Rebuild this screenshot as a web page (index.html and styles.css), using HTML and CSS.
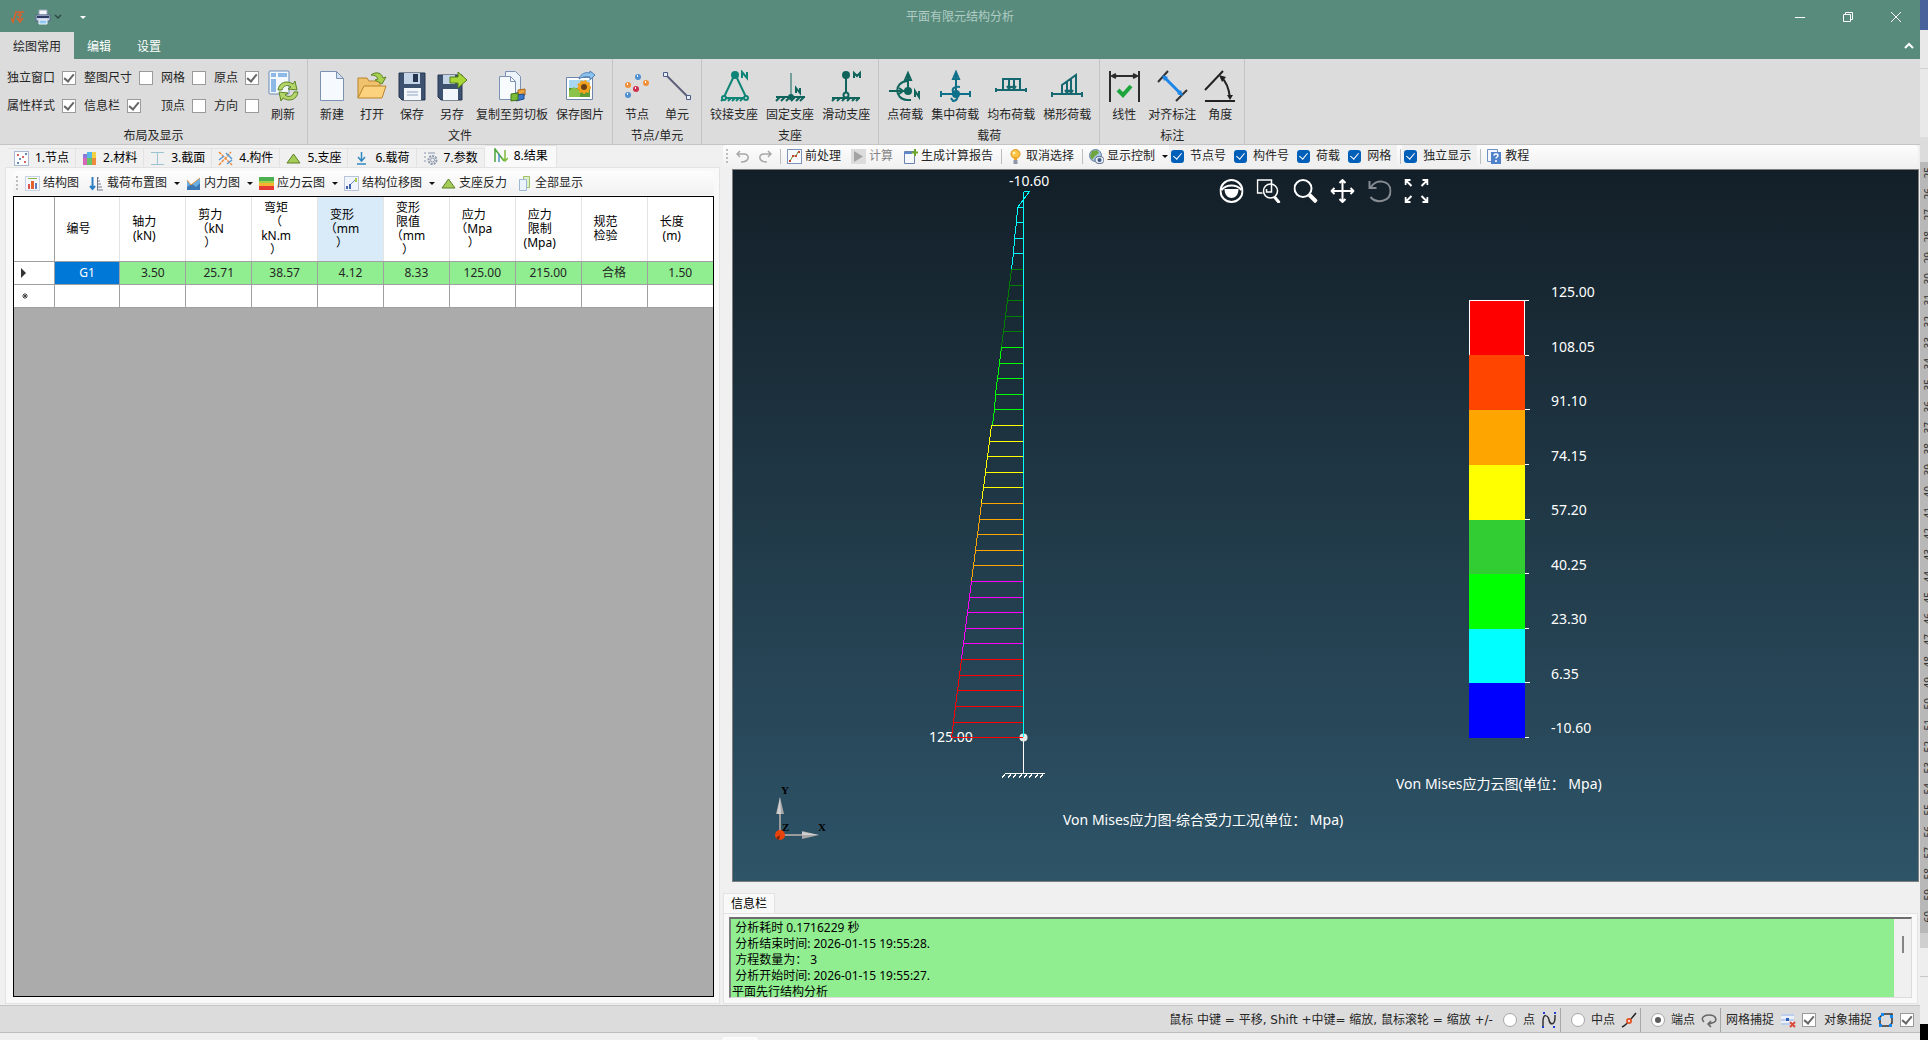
FILE: index.html
```html
<!DOCTYPE html>
<html lang="zh-CN">
<head>
<meta charset="utf-8">
<title>平面有限元结构分析</title>
<link rel="stylesheet" href="styles.css">
</head>
<body>
<div class="desktop">
<div class="app">
  <header class="titlebar">
    <div class="quick">
      <svg class="i14" viewBox="0 0 14 14" fill="none" stroke="#d9622b" stroke-width="1.500"><path d="M0 8l2 4L5 2h8M6 5h5M9 2v8M6 8l3 4 3-4"/></svg>
      <button class="plain" aria-label="打印"><svg class="i16" viewBox="0 0 16 16"><path d="M4 1h8v5H4z" fill="#f4f6fa" stroke="#9aa6bd"/><path d="M1 6h14v6H1z" fill="#c9d2e2" stroke="#55658a"/><path d="M2 8h12" stroke="#2c3c63" stroke-width="2"/><path d="M4 11h8v4H4z" fill="#8fc7f5" stroke="#f4f6fa"/></svg><svg class="i8" viewBox="0 0 8 8" fill="none" stroke="#2c4a41" stroke-width="1.500"><path d="M1 2l3 3 3-3"/></svg></button>
      <button class="plain more" aria-label="自定义"><svg class="i8" viewBox="0 0 8 8"><path d="M1 3h6L4 6z" fill="#fff"/></svg></button>
    </div>
    <h1 class="title">平面有限元结构分析</h1>
    <div class="winbtns">
      <button class="plain" aria-label="最小化"><svg class="i12" viewBox="0 0 12 12" stroke="#fff"><path d="M1 6.500h10"/></svg></button>
      <button class="plain" aria-label="还原"><svg class="i12" viewBox="0 0 12 12" stroke="#fff" fill="none"><path d="M1.500 3.500h7v7h-7zM3.500 3V1.500h7v7H9"/></svg></button>
      <button class="plain" aria-label="关闭"><svg class="i12" viewBox="0 0 12 12" stroke="#fff" fill="none"><path d="M1 1l10 10M11 1L1 11"/></svg></button>
    </div>
  </header>
  <nav class="menu">
    <button class="menutab on">绘图常用</button><button class="menutab">编辑</button><button class="menutab">设置</button>
    <button class="plain fold" aria-label="折叠"><svg class="i12" viewBox="0 0 12 12" stroke="#fff" stroke-width="2" fill="none"><path d="M2 8l4-4 4 4"/></svg></button>
  </nav>

  <section class="ribbon">
    <div class="group">
      <div class="tools">
        <div class="checks">
          <label>独立窗口<input type="checkbox" class="box" checked></label>
          <label>整图尺寸<input type="checkbox" class="box"></label>
          <label>网格<input type="checkbox" class="box"></label>
          <label>原点<input type="checkbox" class="box" checked></label>
          <label>属性样式<input type="checkbox" class="box" checked></label>
          <label>信息栏<input type="checkbox" class="box" checked></label>
          <label>顶点<input type="checkbox" class="box"></label>
          <label>方向<input type="checkbox" class="box"></label>
        </div>
        <button class="big"><svg viewBox="0 0 32 32"><rect x="2" y="1" width="20" height="23" rx="1" fill="#f3f8fd" stroke="#6a8bb5"/><path d="M4 3h5v4H4zM11 3h9v4h-9zM4 9h5v13H4z" fill="#8db9e6"/><path d="M11 20c1-8 9-10 15-6l2-3 2 9-9-1 3-2c-4-3-8-1-9 3z" fill="#b5d56a" stroke="#5d8526"/><path d="M31 22c-1 8-9 10-15 6l-2 3-2-9 9 1-3 2c4 3 8 1 9-3z" fill="#b5d56a" stroke="#5d8526"/></svg>刷新</button>
      </div>
      <div class="caption">布局及显示</div>
    </div>
    <div class="group">
      <div class="tools">
        <button class="big"><svg viewBox="0 0 32 32"><path d="M4.500 1.500h16l7 7v22h-23z" fill="#f6f9fd" stroke="#7c92b5"/><path d="M20.500 1.500v7h7z" fill="#d5e0ef" stroke="#7c92b5"/></svg>新建</button>
        <button class="big"><svg viewBox="0 0 32 32"><path d="M2 28V8h9l2 3h11v5" fill="#f0c26e" stroke="#b9822c"/><path d="M2 28l6-12h22l-4 12z" fill="#fcd27e" stroke="#b9822c"/><path d="M15 5c5-4 11-2 12 3l3-1-4 7-7-4 3-1c-1-3-4-4-7-4z" fill="#a9cf4e" stroke="#5d8526"/></svg>打开</button>
        <button class="big"><svg viewBox="0 0 32 32"><path d="M3 3h26v27H6l-3-3z" fill="#3d5170" stroke="#25344e"/><path d="M8 3h16v11H8z" fill="#c6d4e8"/><path d="M17 4h5v8h-5z" fill="#25344e"/><path d="M8 18h17v12H8z" fill="#f3f6fa"/><path d="M11 22h11M11 25h11" stroke="#8fa2c0"/></svg>保存</button>
        <button class="big"><svg viewBox="0 0 32 32"><path d="M2 5h24v25H5l-3-3z" fill="#3d5170" stroke="#25344e"/><path d="M7 5h12v9H7z" fill="#c6d4e8"/><path d="M7 19h15v11H7z" fill="#f3f6fa"/><path d="M14 7h8V2l9 8-9 8v-5h-8z" fill="#a9d73a" stroke="#557f18"/></svg>另存</button>
        <button class="big"><svg viewBox="0 0 32 32"><path d="M9.500 1.500h10l5 5v16h-15z" fill="#edf3fa" stroke="#7c92b5"/><path d="M3.500 6.500h11l5 5v18h-16z" fill="#f8fbfe" stroke="#7c92b5"/><path d="M14.500 6.500v5h5" fill="none" stroke="#7c92b5"/><path d="M22 20l7-1v6l-7 2z" fill="#efa53a" stroke="#a8641c"/><path d="M20 25l8-1v5l-8 2z" fill="#3a78cf" stroke="#1c4a8f"/><path d="M15 24l7-1v7l-7 1z" fill="#7cba3a" stroke="#41741c"/></svg>复制至剪切板</button>
        <button class="big"><svg viewBox="0 0 32 32"><path d="M2.500 7.500h26v22h-26z" fill="#fff" stroke="#6e86ac"/><path d="M5 10h21v8H5z" fill="#a8d7f4"/><path d="M5 18h21v9H5z" fill="#5d9b35"/><path d="M5 21l5-4 6 4v6H5z" fill="#8bc34a"/><circle cx="20" cy="17" r="6" fill="#f2a11f" stroke="#f2a11f" stroke-width="2" stroke-dasharray="2 2"/><circle cx="20" cy="17" r="3" fill="#67401a"/><path d="M15 9c2-6 7-7 11-6V1l5 4-5 5V7c-5-1-8 0-11 2z" fill="#8ec2ee" stroke="#4b80b5"/></svg>保存图片</button>
      </div>
      <div class="caption">文件</div>
    </div>
    <div class="group">
      <div class="tools">
        <button class="big"><svg viewBox="0 0 32 32"><circle cx="17" cy="7" r="3" fill="#4f8fd3"/><circle cx="7" cy="15" r="3" fill="#f0903a"/><circle cx="25" cy="13" r="3" fill="#f0903a"/><circle cx="15" cy="19" r="3" fill="#d22f4d"/><circle cx="7" cy="25" r="3" fill="#4f8fd3"/><path d="M16 6h1M6 14h1M24 12h1M14 18h1M6 24h1" stroke="#fff" stroke-width="2"/></svg>节点</button>
        <button class="big"><svg viewBox="0 0 32 32"><path d="M5 5l22 22" stroke="#5d5f78" stroke-width="2"/><path d="M2.500 2.500h4v4h-4zM25.500 25.500h4v4h-4z" fill="#e8eef8" stroke="#4b5b85"/></svg>单元</button>
      </div>
      <div class="caption">节点/单元</div>
    </div>
    <div class="group">
      <div class="tools">
        <button class="big"><svg viewBox="0 0 32 32" fill="none" stroke="#0f8577" stroke-width="2"><path d="M16 6L6 27M18 6l10 21M5 28h23M3 31l3-3M10 31l3-3M14 31l3-3M18 31l3-3M22 31l3-3"/><circle cx="17" cy="5" r="3" fill="#0f8577"/><circle cx="6" cy="28" r="2" fill="#dcdcdc"/><circle cx="28" cy="28" r="2" fill="#dcdcdc"/><path d="M24 8V2l5 6V2"/></svg>铰接支座</button>
        <button class="big"><svg viewBox="0 0 32 32" fill="none" stroke="#0f645c" stroke-width="2"><path d="M17 3v24" stroke-width="1"/><path d="M2 27h29M2 31l4-4M7 31l4-4M12 31l4-4M17 31l4-4M22 31l4-4M26 31l4-4"/><circle cx="17" cy="27" r="2" fill="#0f645c"/><path d="M22 23v-5l4 5v-5"/></svg>固定支座</button>
        <button class="big"><svg viewBox="0 0 32 32" fill="none" stroke="#0f645c" stroke-width="2"><path d="M16 5v20M2 28h28M2 31l3-3M7 31l3-3M12 31l3-3M17 31l3-3M22 31l3-3M26 31l3-3"/><circle cx="16" cy="5" r="3" fill="#0f645c"/><circle cx="16" cy="25" r="2.500" fill="#dcdcdc"/><path d="M24 8V3l3 3 3-3v5"/></svg>滑动支座</button>
      </div>
      <div class="caption">支座</div>
    </div>
    <div class="group">
      <div class="tools">
        <button class="big"><svg viewBox="0 0 32 32" fill="none" stroke="#0f645c" stroke-width="2"><path d="M19 21V4M16 10l3-7 3 7zM0 21h18M18 11C5 12 5 29 18 30h4M10 18l4 3-4 3"/><circle cx="19" cy="21" r="3" fill="#0f645c"/><path d="M26 27v-6l4 6v-6"/></svg>点荷载</button>
        <button class="big"><svg viewBox="0 0 32 32" fill="none" stroke="#0f7089" stroke-width="2"><path d="M17 24V4M14 9l3-7 3 7zM2 24h29M2 21v6M31 21v6M21 17c-8-1-9 4-5 7s2 7-2 7l-2-3"/><circle cx="17" cy="24" r="3" fill="#0f7089"/></svg>集中荷载</button>
        <button class="big"><svg viewBox="0 0 32 32" fill="none" stroke="#15686f" stroke-width="2"><path d="M1 20h31M8 20V9h17v11M14 9v9M19 9v9M12 16l2 3 2-3M17 16l2 3 2-3M1 18v4M31 18v4"/></svg>均布荷载</button>
        <button class="big"><svg viewBox="0 0 32 32" fill="none" stroke="#15686f" stroke-width="2"><path d="M1 24h31M11 24v-9L25 5v19M16 12v10M20 9v13M14 20l2 3 2-3M18 20l2 3 2-3M1 22v5M31 22v5M11 15v9"/></svg>梯形荷载</button>
      </div>
      <div class="caption">载荷</div>
    </div>
    <div class="group">
      <div class="tools">
        <button class="big"><svg viewBox="0 0 32 32" fill="none" stroke="#2c2c2c" stroke-width="2"><path d="M2 1v31M31 1v31M4 6h25M8 4L4 6l4 2M25 4l4 2-4 2"/><path d="M10 20l5 5 8-9" stroke="#1ca53d" stroke-width="4"/></svg>线性</button>
        <button class="big"><svg viewBox="0 0 32 32" fill="none" stroke="#333" stroke-width="2"><path d="M2 12L12 1M20 31L31 20"/><path d="M8 7l17 17" stroke="#1b86e8" stroke-width="3"/><path d="M6 5l6 2-4 4zM27 26l-6-2 4-4z" fill="#1b86e8" stroke="none"/></svg>对齐标注</button>
        <button class="big"><svg viewBox="0 0 32 32" fill="none" stroke="#222" stroke-width="2"><path d="M1 31h30M1 20L19 1M17 7c6 5 8 12 9 21"/><path d="M15 5l7 2-4 5zM23 25h6l-3 5z" fill="#222" stroke="none"/></svg>角度</button>
      </div>
      <div class="caption">标注</div>
    </div>
  </section>

  <main class="work">
    <section class="left">
      <div class="steps" role="tablist">
        <button class="step" role="tab"><svg class="i15" viewBox="0 0 15 15"><rect x=".5" y=".5" width="14" height="14" fill="#fbfcfe" stroke="#a9b9d2"/><path d="M3 4h2M8 6h2M10 11h2" stroke="#c33" stroke-width="1.500"/><path d="M5 8h2M11 3h2M3 12h2" stroke="#369" stroke-width="1.500"/></svg>1.节点</button>
        <button class="step" role="tab"><svg class="i15" viewBox="0 0 15 15"><path d="M1 3h4v11H1z" fill="#d667b8"/><path d="M1 3h4v4H1z" fill="#8d7ad9"/><path d="M5 1h5v6H5z" fill="#55b6e8"/><path d="M10 1h4v6h-4z" fill="#f3d145"/><path d="M5 7h5v7H5z" fill="#65c466"/><path d="M10 7h4v7h-4z" fill="#ef8a3c"/></svg>2.材料</button>
        <button class="step" role="tab"><svg class="i15" viewBox="0 0 15 15" fill="none" stroke="#9cc3d2"><path d="M1 1.500h13M1 13.500h13M7.500 2v11"/></svg>3.截面</button>
        <button class="step" role="tab"><svg class="i15" viewBox="0 0 15 15" fill="none" stroke-width="1.500"><path d="M1 1l13 13M1 14L13 1" stroke="#f08a3c" stroke-dasharray="3 1"/><path d="M8 2l6 6M1 9l5-4M9 13l5-4" stroke="#5b9bd5"/></svg>4.构件</button>
        <button class="step" role="tab"><svg class="i15" viewBox="0 0 15 15"><path d="M7.500 3L14 12H1z" fill="#a5cc57" stroke="#5e7f2a"/></svg>5.支座</button>
        <button class="step" role="tab"><svg class="i15" viewBox="0 0 15 15" fill="none" stroke="#3087c2" stroke-width="1.500"><path d="M7.500 1v9M4 6l3.500 4L11 6M3 13h9"/></svg>6.载荷</button>
        <button class="step" role="tab"><svg class="i15" viewBox="0 0 15 15" fill="none" stroke="#8b98ad"><path d="M1 2h2M5 2h7M1 6h2M1 10h2"/><circle cx="9.500" cy="9" r="4" stroke-width="2" stroke-dasharray="2 1"/><circle cx="9.500" cy="9" r="2"/></svg>7.参数</button>
        <button class="step on" role="tab" aria-selected="true"><svg class="i15" viewBox="0 0 15 15" fill="none" stroke-width="1.500"><path d="M2 14V1l9 12" stroke="#4aa33a"/><path d="M6 14V6" stroke="#4a90c8"/><path d="M12 2v11M9 10l3 3 3-3" stroke="#7db93a"/></svg>8.结果</button>
      </div>
      <div class="pane">
        <div class="toolbar">
          <span class="grip"></span>
          <button class="tool"><svg class="i15" viewBox="0 0 15 15"><rect x=".5" y=".5" width="14" height="14" fill="#f4f7fb" stroke="#c9d2e0"/><path d="M3 2h9v1H3z" fill="#8cb84a"/><path d="M3 8h2v5H3z" fill="#d9534f"/><path d="M6 5h3v8H6z" fill="#e0602e"/><path d="M10 7h2v6h-2z" fill="#5b7fc0"/></svg>结构图</button>
          <button class="tool"><svg class="i15" viewBox="0 0 15 15" fill="none"><path d="M3.500 1v12M1 10l2.500 3L6 10" stroke="#2f7fc4" stroke-width="2"/><path d="M8 2h2M8 5h3M8 8h4M8 11h5M8 14h6M8.500 1v13" stroke="#6c7688"/></svg>载荷布置图</button><button class="drop" aria-label="展开"></button>
          <button class="tool"><svg class="i15" viewBox="0 0 15 15"><path d="M1 4l4 5 5-4 4-3v12H1z" fill="#6badE2"/><path d="M1 11l5-3 4 3 4-4v7H1z" fill="#3c78b4"/><path d="M1 4l4 5 5-4 4-3" fill="none" stroke="#e8963c"/></svg>内力图</button><button class="drop" aria-label="展开"></button>
          <button class="tool"><svg class="i15" viewBox="0 0 15 15"><path d="M0 1h15v4H0z" fill="#4caf50"/><path d="M0 5h15v2H0z" fill="#a8cf45"/><path d="M0 7h15v3H0z" fill="#f5b32f"/><path d="M0 10h15v4H0z" fill="#e53935"/></svg>应力云图</button><button class="drop" aria-label="展开"></button>
          <button class="tool"><svg class="i15" viewBox="0 0 15 15"><rect x=".5" y=".5" width="14" height="14" fill="#f1f4fa" stroke="#b7c3da"/><path d="M2 10h2v3H2zM5 8h2v5H5z" fill="#3f62ab"/><path d="M7 8l5-5" stroke="#6b89c4"/><path d="M12 2v4" stroke="#a8cf45" stroke-width="2"/></svg>结构位移图</button><button class="drop" aria-label="展开"></button>
          <button class="tool"><svg class="i15" viewBox="0 0 15 15"><path d="M7.500 3L14 12H1z" fill="#a5cc57" stroke="#5e7f2a"/></svg>支座反力</button>
          <button class="tool"><svg class="i15" viewBox="0 0 15 15"><path d="M6.500.500h6v11h-6z" fill="#dff0c8" stroke="#9dbf6a"/><path d="M2.500 3.500h7v11h-7z" fill="#eaf3fb" stroke="#9db8d6"/></svg>全部显示</button>
        </div>
        <div class="gridbox">
          <table>
            <thead><tr><th class="rowhead"></th><th>编号</th><th>轴力<br>(kN)</th><th>剪力<br>（kN<br>）</th><th>弯矩<br>（<br>kN.m<br>）</th><th class="hot">变形<br>（mm<br>）</th><th>变形<br>限值<br>（mm<br>）</th><th>应力<br>（Mpa<br>）</th><th>应力<br>限制<br>(Mpa)</th><th>规范<br>检验</th><th>长度<br>(m)</th></tr></thead>
            <tbody>
              <tr class="pass"><th class="rowhead"><svg class="i10" viewBox="0 0 10 10"><path d="M3 0l5 5-5 5z" fill="#333"/></svg></th><td class="sel">G1</td><td>3.50</td><td>25.71</td><td>38.57</td><td>4.12</td><td>8.33</td><td>125.00</td><td>215.00</td><td>合格</td><td>1.50</td></tr>
              <tr><th class="rowhead star"><svg class="i8" viewBox="0 0 8 8"><path d="M4 1v6M1 4h6M2 2l4 4M6 2L2 6" stroke="#444"/></svg></th><td></td><td></td><td></td><td></td><td></td><td></td><td></td><td></td><td></td><td></td></tr>
            </tbody>
          </table>
        </div>
      </div>
    </section>

    <section class="right">
      <div class="toolbar wide">
        <span class="grip"></span>
        <button class="tool" aria-label="撤销"><svg class="i13" viewBox="0 0 13 13" fill="none" stroke="#a8a8a8" stroke-width="1.500"><path d="M5 12c9 0 9-8 3-8H1M4 1L1 4l3 3"/></svg></button>
        <button class="tool" aria-label="重做"><svg class="i13" viewBox="0 0 13 13" fill="none" stroke="#a8a8a8" stroke-width="1.500"><path d="M8 12c-9 0-9-8-3-8h7M9 1l3 3-3 3"/></svg></button>
        <span class="sep"></span>
        <button class="tool"><svg class="i15" viewBox="0 0 15 15"><rect x=".5" y=".5" width="14" height="14" fill="#f8fafd" stroke="#7d93bb"/><path d="M3 12l3-5h3l2-4" stroke="#5b9b35" fill="none"/><path d="M2 11h2v2H2zM11 2h2v2h-2zM5 6h2v2H5zM8 6h2v2H8z" fill="#c8452f"/></svg>前处理</button>
        <button class="tool" disabled><svg class="i15" viewBox="0 0 15 15"><path d="M0 0h15v15H0z" fill="#dcdcdc"/><path d="M3 2l9 5.500L3 13z" fill="#a3a3a3"/></svg>计算</button>
        <button class="tool"><svg class="i15" viewBox="0 0 15 15"><path d="M1.500 2.500h10v12h-10z" fill="#f5f8fd" stroke="#6b83b0"/><path d="M1 3h8v2H1z" fill="#5d87c9"/><path d="M12 0v7M8.500 3.500h6.500" stroke="#6ba52c" stroke-width="2"/></svg>生成计算报告</button>
        <span class="sep"></span>
        <button class="tool"><svg class="i15" viewBox="0 0 15 15"><circle cx="7.500" cy="5" r="4.500" fill="#fbc441" stroke="#e0921e"/><circle cx="6" cy="4" r="1.500" fill="#fff0b8"/><path d="M6 8h3v3H6z" fill="#f3a526"/><path d="M5.500 11h4v4h-4z" fill="#8f96a8"/></svg>取消选择</button>
        <span class="sep"></span>
        <button class="tool"><svg class="i15" viewBox="0 0 15 15"><circle cx="6.500" cy="6.500" r="6" fill="#a9c9ea" stroke="#64819f"/><path d="M3 2l5-1 2 3-4 3-3 4-2-4z" fill="#6fa53c"/><ellipse cx="10.500" cy="11" rx="4.500" ry="3.500" fill="#e8edf5" stroke="#51617f"/><circle cx="10.500" cy="11" r="2" fill="#3f5786"/></svg>显示控制</button><button class="drop" aria-label="展开"></button>
        <label class="tick"><input type="checkbox" checked>节点号</label><label class="tick"><input type="checkbox" checked>构件号</label><label class="tick"><input type="checkbox" checked>荷载</label><label class="tick"><input type="checkbox" checked>网格</label>
        <span class="sep"></span>
        <label class="tick"><input type="checkbox" checked>独立显示</label>
        <span class="sep"></span>
        <button class="tool"><svg class="i15" viewBox="0 0 15 15"><path d="M.5.500h10v12H.500z" fill="#f4f8fd" stroke="#6e8fc4"/><path d="M4 3h10v12H4z" fill="#4f82cb"/><path d="M7 6.500c0-2 4-2 4 0 0 1.500-2 1.500-2 3M9 11v2" stroke="#fff" stroke-width="1.500" fill="none"/></svg>教程</button>
      </div>

      <div class="view">
        <svg class="scene" role="img" aria-label="Von Mises应力图">
          <g class="label">
            <text x="276" y="16">-10.60</text>
            <text x="196" y="572">125.00</text>
            <text x="330" y="655">Von Mises应力图-综合受力工况(单位： Mpa)</text>
            <text x="663" y="619">Von Mises应力云图(单位： Mpa)</text>
            <text x="818" y="127">125.00</text><text x="818" y="182">108.05</text><text x="818" y="236">91.10</text><text x="818" y="291">74.15</text><text x="818" y="345">57.20</text><text x="818" y="400">40.25</text><text x="818" y="454">23.30</text><text x="818" y="509">6.35</text><text x="818" y="563">-10.60</text>
          </g>
          <g class="lines" transform="translate(.5 .5)">
            <path stroke="#fff" d="M290 567V603M271 603H311M272 603l-4 5M278 603l-4 5M283 603l-4 5M289 603l-4 5M294 603l-4 5M299 603l-4 5M305 603l-4 5M310 603l-4 5"/>
            <path stroke="#0ff" d="M290 21H296L284 37H290M284 37L283 52H290M283 52L281 68H290M281 68L280 83H290M280 83L278 99"/>
            <path stroke="#008000" d="M290 99H278L276 115H290M276 115L274 130H290M274 130L272 146H290M272 146L270 161H290M270 161L268 177"/>
            <path stroke="#0f0" d="M290 177H268L266 193H290M266 193L264 208H290M264 208L262 224H290M262 224L261 239H290M261 239L259 255"/>
            <path stroke="#ff0" d="M290 255H258L256 271H290M256 271L254 286H290M254 286L252 302H290M252 302L250 317H290M250 317L248 333"/>
            <path stroke="orange" d="M290 333H248L246 349H290M246 349L244 364H290M244 364L242 380H290M242 380L240 395H290M240 395L238 411"/>
            <path stroke="#f0f" d="M290 411H238L236 427H290M236 427L234 442H290M234 442L232 458H290M232 458L230 473H290M230 473L228 489"/>
            <path stroke="red" d="M290 489H228L226 505H290M226 505L224 520H290M224 520L222 536H290M222 536L220 552H290M220 552L218 567"/>
            <path stroke="#0ff" d="M290 21V567"/>
          </g>
          <circle cx="290.500" cy="567.500" r="4" fill="#e8e8e8"/>
          <path class="lines" stroke="red" d="M218 567.500H290"/>
          <path class="lines" stroke="#0ff" d="M290.500 560V567"/>
          <g class="lines">
            <path fill="red" d="M736 130h56v55h-56z"/><path fill="#ff4500" d="M736 185h56v55h-56z"/><path fill="orange" d="M736 240h56v55h-56z"/><path fill="#ff0" d="M736 295h56v55h-56z"/><path fill="#32cd32" d="M736 350h56v54h-56z"/><path fill="#0f0" d="M736 404h56v55h-56z"/><path fill="#0ff" d="M736 459h56v54h-56z"/><path fill="#00f" d="M736 513h56v55h-56z"/>
            <path fill="none" stroke="#fff" d="M736.500 185V130.500H796M791.500 130V185M792 185.500h4M792 239.500h5M792 294.500h4M792 349.500h5M792 403.500h4M792 458.500h4M792 512.500h5M792 567.500h4"/>
          </g>
          <path d="M47 665V641M47 665H72" stroke="#9a9a9a" stroke-width="2"/>
          <path d="M47 627l4 17h-8zM86 665l-17 4v-8z" fill="#a6a6a6"/><path d="M47 627l1 17h-4zM86 665l-17 0v-3z" fill="#d0d0d0"/>
          <circle cx="47" cy="665" r="5" fill="#e8430d"/><path d="M47 665l-4 3 3 2z" fill="#7a2308"/>
          <g class="axis"><text x="48" y="624">Y</text><text x="85" y="661">X</text><text x="49" y="661">Z</text></g>
        </svg>
        <div class="nav">
          <button class="plain" aria-label="视图"><svg viewBox="0 0 24 24" fill="none" stroke="#fff" stroke-width="2"><circle cx="12" cy="12" r="11"/><path d="M2 11c5-6 15-6 20 0"/><path d="M5 10h14c0 12-14 12-14 0z" fill="#fff" stroke="none"/></svg></button>
          <button class="plain" aria-label="窗口缩放"><svg viewBox="0 0 24 24" fill="none" stroke="#fff" stroke-width="1.500"><path d="M6 14H1V1h14v3"/><circle cx="14" cy="12" r="7"/><path d="M15 4v9h-5v-3"/><path d="M18 18l5 6" stroke-width="3"/></svg></button>
          <button class="plain" aria-label="缩放"><svg viewBox="0 0 24 24" fill="none" stroke="#fff" stroke-width="2"><circle cx="9.500" cy="9.500" r="8.500"/><path d="M16 16l7 7" stroke-width="4"/></svg></button>
          <button class="plain" aria-label="平移"><svg viewBox="0 0 24 24" fill="none" stroke="#fff" stroke-width="2"><path d="M12 1v22M1 12h22M9 4l3-3 3 3M9 20l3 3 3-3M4 9l-3 3 3 3M20 9l3 3-3 3"/></svg></button>
          <button class="plain" aria-label="返回"><svg viewBox="0 0 24 24" fill="none" stroke="#868c91" stroke-width="2"><path d="M2 2v7h7M3 9C8-1 23 1 23 12S9 25 3 18"/></svg></button>
          <button class="plain" aria-label="全屏"><svg viewBox="0 0 24 24" fill="none" stroke="#fff" stroke-width="2"><path d="M1 6V1h5M1 1l6 6M18 1h5v5M23 1l-6 6M1 18v5h5M1 23l6-6M23 18v5h-5M23 23l-6-6"/></svg></button>
        </div>
      </div>

      <div class="info">
        <div class="infotab"><label for="log">信息栏</label></div>
        <div class="infobody">
          <div class="logbox">
            <textarea id="log" readonly> 分析耗时 0.1716229 秒
 分析结束时间: 2026-01-15 19:55:28.
 方程数量为： 3
 分析开始时间: 2026-01-15 19:55:27.
平面先行结构分析</textarea>
            <div class="scroll"><span class="thumb"></span></div>
          </div>
        </div>
      </div>
    </section>
  </main>

  <footer class="status">
    <span class="hint">鼠标 中键 = 平移, Shift +中键= 缩放, 鼠标滚轮 = 缩放 +/-</span>
    <label class="snap"><input type="radio" name="snap">点<svg class="i16" viewBox="0 0 16 16" fill="none"><path d="M2 14V9c0-8 5-6 6-1s6 6 6-3V3" stroke="#333" stroke-width="1.500"/><path d="M2 1h2M13 1h2M1 15h2M12 15h2" stroke="#1d3fd1" stroke-width="2"/></svg></label>
    <span class="bar"></span>
    <label class="snap"><input type="radio" name="snap">中点<svg class="i16" viewBox="0 0 16 16" fill="none"><path d="M1 15c5-2 8-7 14-14" stroke="#222" stroke-width="1.500"/><circle cx="8" cy="9" r="2" stroke="#e4572a" stroke-width="2" fill="#fff"/></svg></label>
    <span class="bar"></span>
    <label class="snap"><input type="radio" name="snap" checked>端点<svg class="i16" viewBox="0 0 16 16" fill="none" stroke="#666" stroke-width="1.500"><path d="M3 10C-1 6 3 3 8 3c8 0 9 7 3 8l-3 1M10 9l-3 3 3 3"/></svg></label>
    <span class="bar"></span>
    <label class="snap obj">网格捕捉<svg class="i16" viewBox="0 0 16 16"><path d="M1 2h13v11H1z" fill="#eaf1fb"/><path d="M1 3h13M1 8h13M1 12h9" stroke="#8faadc"/><path d="M6 6h3v3H6z" fill="#2c5bb8"/><path d="M10 10l5 5M15 10l-5 5" stroke="#d94a3c" stroke-width="2"/></svg><input type="checkbox" class="box" checked></label>
    <label class="snap obj">对象捕捉<svg class="i16" viewBox="0 0 16 16" fill="none"><path d="M2 14V5l3-3h9v9l-3 3z" stroke="#333" stroke-width="1.500"/><path d="M3 1h3v3H3zM12 3h3v3h-3zM1 12h3v3H1zM11 12h3v3h-3zM0 5h3v3H0z" fill="#1488f0"/></svg><input type="checkbox" class="box" checked></label>
  </footer>
  <div class="under"><span class="undertab"></span></div>
</div>

<aside class="behind" aria-hidden="true">
  <div class="b-blue"></div><div class="b-top"></div><div class="b-head"></div>
  <div class="ruler"><span>25</span><span>26</span><span>27</span><span>28</span><span>29</span><span>30</span><span>31</span><span>32</span><span>33</span><span>34</span><span>35</span><span>36</span><span>37</span><span>38</span><span>39</span><span>40</span><span>41</span><span>42</span><span>43</span><span>44</span><span>45</span><span>46</span><span>47</span><span>48</span><span>49</span><span>50</span><span>51</span><span>52</span><span>53</span><span>54</span><span>55</span><span>56</span><span>57</span><span>58</span><span>59</span><span>60</span></div>
  <div class="b-foot"></div><div class="b-low"></div><div class="b-black"></div>
</aside>
</div>
</body>
</html>
```

FILE: styles.css
```css
* { box-sizing: border-box; }
html, body { height: 100%; margin: 0; }
body, button, input, textarea {
  font-family: "Noto Sans", "Noto Sans CJK SC", sans-serif;
  font-size: 12px;
  line-height: 16px;
  color: #262626;
}
button { border: 0; padding: 0; margin: 0; background: none; white-space: nowrap; }
input { margin: 0; flex: none; }
svg { flex: none; display: block; }
.i8 { width: 8px; height: 8px; }
.i10 { width: 10px; height: 10px; }
.i12 { width: 12px; height: 12px; }
.i13 { width: 13px; height: 13px; }
.i14 { width: 14px; height: 14px; }
.i15 { width: 15px; height: 15px; }
.i16 { width: 16px; height: 16px; }
.plain { display: flex; align-items: center; justify-content: center; gap: 3px; }

.desktop { display: grid; grid-template-columns: 1fr 8px; min-height: 100vh; }
.app { display: flex; flex-direction: column; min-width: 0; background: #f0f0f0; }

/* title bar and menu */
.titlebar { display: grid; grid-template-columns: 1fr auto 1fr; align-items: center; height: 32px; padding-top: 1px; background: #588b7c; }
.quick { display: flex; align-items: center; padding-left: 11px; gap: 10px; }
.more { margin-left: 7px; }
.title { margin: 0; font-size: 12px; font-weight: 400; color: #b0ccc3; }
.winbtns { display: flex; justify-content: flex-end; padding-right: 18px; gap: 36px; }
.menu { display: flex; align-items: stretch; height: 27px; background: #588b7c; }
.menutab { padding: 2px 13px 0; color: #fff; }
.menutab.on { background: #dcdcdc; color: #262626; }
.fold { margin-left: auto; padding-right: 5px; }

/* ribbon */
.ribbon { display: flex; background: #dcdcdc; border-bottom: 1px solid #c4c4c4; }
.group { display: flex; flex-direction: column; border-right: 1px solid #c4c4c4; padding: 0 4px; }
.tools { display: flex; padding-top: 11px; height: 69px; }
.caption { text-align: center; }
.big { display: flex; flex-direction: column; align-items: center; gap: 5px; min-width: 40px; padding: 0 4px; }
.big svg { width: 32px; height: 32px; }
.checks { display: grid; grid-template-columns: repeat(4, auto); gap: 14px 8px; align-content: start; padding: 1px 4px 0 3px; }
.checks label { display: flex; align-items: center; gap: 7px; height: 14px; }

.box { appearance: none; width: 14px; height: 14px; background: #fff; border: 1px solid #9a9a9a; display: grid; place-items: center; }
.box:checked::after { content: ""; width: 4px; height: 8px; margin-top: -2px; border: solid #666; border-width: 0 2px 2px 0; transform: rotate(40deg); }

/* work area */
.work { flex: 1; display: grid; grid-template-columns: 3fr 5fr; min-height: 0; }
.left { display: flex; flex-direction: column; padding: 0 0 1px 5px; min-width: 0; }
.steps { display: flex; align-items: flex-end; padding-left: 3px; height: 22px; }
.step { display: flex; align-items: center; gap: 6px; height: 19px; padding: 0 6px; border: 1px solid #e3e3e3; border-width: 1px 1px 0 0; color: #000; }
.step.on { height: 22px; padding: 0 8px 2px; background: #f9f9f9; }
.pane { flex: 1; display: flex; flex-direction: column; border: 1px solid #e3e3e3; background: #f9f9f9; padding: 3px 5px 6px 7px; }

.toolbar { display: flex; align-items: center; height: 24px; padding-left: 3px; background: linear-gradient(#fdfdfd, #f1f1f1); border-radius: 3px; }
.toolbar > * { flex: none; }
.grip { width: 3px; height: 15px; margin-right: 2px; background: repeating-linear-gradient(#bdbdbd 0 2px, transparent 2px 4px) 0 0 / 2px 100% no-repeat; }
.left .grip { margin-right: 1px; }
.tool { display: flex; align-items: center; gap: 3px; padding: 0 5px; }
.tool:disabled { color: #838383; }
.drop { width: 9px; height: 16px; display: grid; place-items: center; }
.drop::before { content: ""; border: solid transparent; border-width: 3px 3px 0; border-top-color: #111; }
.sep { width: 1px; height: 15px; margin: 0 1px 0 3px; background: #bdbdbd; }
.tick { display: flex; align-items: center; gap: 6px; height: 22px; padding: 0 6px 0 2px; background: #f0f0f0; }
.tick input { appearance: none; width: 13px; height: 13px; border-radius: 3px; background: #005fb8; display: grid; place-items: center; }
.tick input:checked::after { content: ""; width: 4px; height: 7px; margin-top: -2px; border: solid #fff; border-width: 0 1px 1px 0; transform: rotate(40deg); }

.gridbox { flex: 1; margin-top: 1px; border: 1px solid #000; background: #ababab; }
table { width: 100%; table-layout: fixed; border-collapse: collapse; }
th, td { font-weight: 400; padding: 0; text-align: center; background: #fff; overflow: hidden; white-space: nowrap; }
thead th { height: 64px; line-height: 14px; padding-right: 17px; border-right: 1px solid #e3e3e3; border-bottom: 1px solid #a0a0a0; color: #000; }
th.rowhead { width: 40px; padding: 0; border-right: 1px solid #a0a0a0; }
thead th.hot { background: #d9eaf8; }
tbody td, tbody th { height: 23px; border-right: 1px solid #a0a0a0; border-bottom: 1px solid #a0a0a0; }
tbody tr > :last-child, thead tr > :last-child { border-right: 0; }
.rowhead svg { margin-left: 4px; }
.rowhead.star svg { margin-left: 7px; }
.pass td { background: #90ee90; }
.pass td.sel { background: #0078d7; color: #fff; }

.right { display: flex; flex-direction: column; min-width: 0; padding: 0 1px 1px 3px; }
.wide { height: 22px; margin-right: 1px; }
.view { flex: 1; position: relative; margin: 2px 0 0 9px; border: 1px solid #7d7d7d; background: linear-gradient(#131f28, #2e5468); min-height: 680px; }
.scene { position: absolute; inset: 0; width: 100%; height: 100%; }
.label { font-size: 14px; fill: #fff; }
.axis { font-family: "Liberation Serif", serif; font-size: 11px; font-weight: 700; fill: #000; }
.lines { fill: none; shape-rendering: crispEdges; }
.nav { position: absolute; top: 9px; left: 50%; transform: translateX(-50%); display: flex; gap: 13px; padding-right: 4px; }
.nav svg { width: 24px; height: 24px; }

.info { margin-top: 11px; }
.infotab { width: fit-content; padding: 2px 7px 1px; border: 1px solid #e3e3e3; border-bottom: 0; background: #f9f9f9; color: #000; }
.infobody { border: 1px solid #e3e3e3; background: #f9f9f9; padding: 3px 5px 5px; margin-right: 1px; }
.logbox { display: flex; height: 81px; border: 1px solid #dcdcdc; border-top: 2px solid #6d6d6d; border-left: 2px solid #7d7d7d; }
textarea { flex: 1; display: block; border: 0; resize: none; overflow: hidden; margin: 0; padding: 1px 1px 0; background: #90ee90; color: #000; outline: 0; }
.scroll { width: 17px; background: #f0f0f0; padding: 17px 0 0 8px; }
.thumb { display: block; width: 2px; height: 17px; background: #858585; }

/* status bar */
.status { display: flex; align-items: center; justify-content: flex-end; height: 28px; padding: 1px 6px 0 0; background: #dcdcdc; border-top: 1px solid #c4c4c4; border-bottom: 1px solid #bdbdbd; }
.hint { font-family: "DejaVu Sans", "Noto Sans CJK SC", sans-serif; }
.snap { display: flex; align-items: center; gap: 6px; padding: 0 3px 0 10px; }
.snap.obj { padding: 0 0 0 8px; }
.bar + .snap.obj { padding-left: 5px; }
.snap input[type="radio"] { appearance: none; width: 14px; height: 14px; border: 1px solid #a6a6a6; border-radius: 50%; background: #fff; display: grid; place-items: center; }
.snap input[type="radio"]:checked::after { content: ""; width: 6px; height: 6px; border-radius: 50%; background: #5c5c5c; }
.bar { width: 1px; height: 24px; background: #a8a8a8; }
.under { display: flex; height: 7px; padding-left: 722px; background: #eee; }
.undertab { width: 36px; margin-top: 4px; border-radius: 4px 4px 0 0; background: #fafafa; }

/* neighbouring window at the right edge */
.behind { display: flex; flex-direction: column; overflow: hidden; background: #eee; }
.b-blue { height: 30px; background: #48639b; }
.b-top { height: 107px; background: linear-gradient(#e9e9e9 0 38px, #d2d2d2 38px 39px, #e9e9e9 39px); }
.b-head { height: 25px; background: #dcdcdc; }
.ruler { flex: 1; display: flex; flex-direction: column; justify-content: space-around; padding: 0 0 6px 2px; background: #b8b8b8; overflow: hidden; }
.ruler span { writing-mode: vertical-rl; transform: rotate(180deg); width: 12px; line-height: 12px; font-size: 10px; color: #333; }
.b-foot { height: 15px; background: #cfcfcf; }
.b-low { height: 76px; background: linear-gradient(#eee 0 28px, #c8c8c8 28px 29px, #eee 29px); }
.b-black { height: 16px; background: #000; }
```
